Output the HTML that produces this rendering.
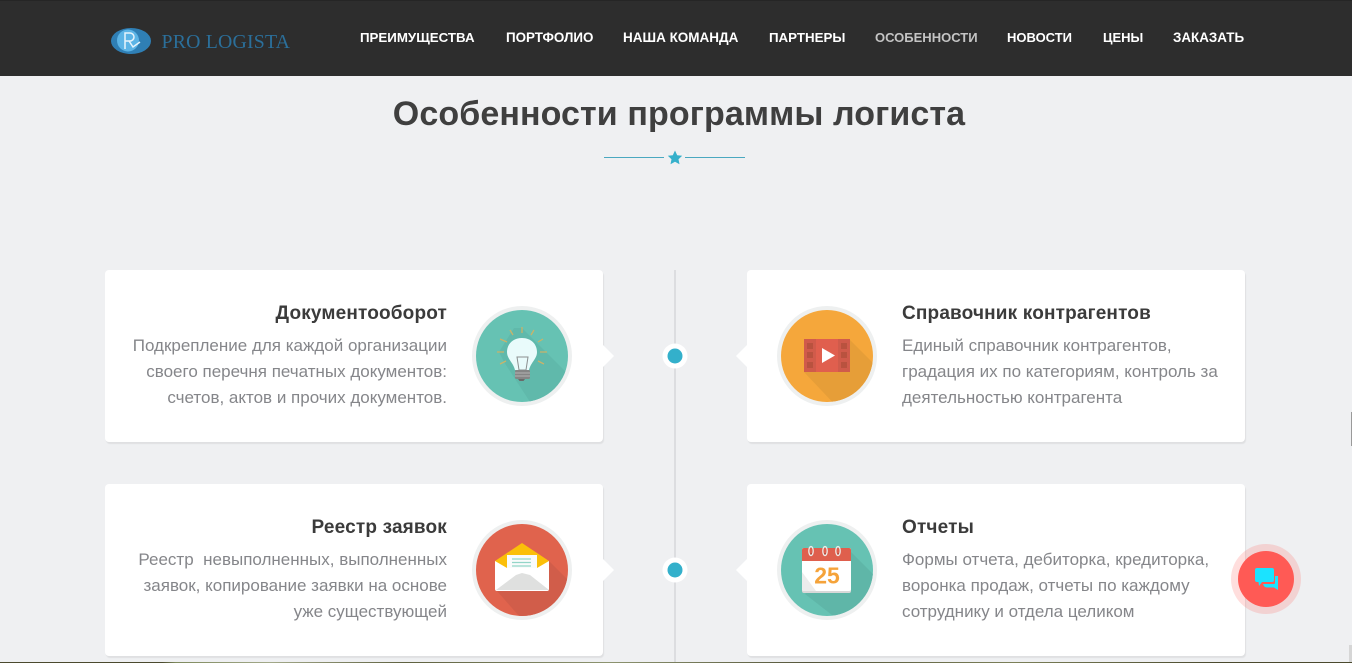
<!DOCTYPE html>
<html lang="ru"><head><meta charset="utf-8"><title>Pro Logista</title>
<style>
html,body{margin:0;padding:0;width:1352px;height:663px;overflow:hidden;background:#eff0f2;font-family:"Liberation Sans",sans-serif}
.a{position:absolute;white-space:nowrap}
#hdr{position:absolute;left:0;top:0;width:1352px;height:76px;background:#2d2d2d;border-top:1px solid #252525;box-sizing:border-box}
.n{position:absolute;top:30px;font-size:13.400px;line-height:16px;font-weight:700;color:#fff;white-space:nowrap}
.card{position:absolute;width:498px;height:172px;background:#fff;border-radius:4px;box-shadow:1px 2px 1px #dfe0e2}
.t{position:absolute;font-size:19px;line-height:24px;font-weight:700;color:#3b3b3b;white-space:nowrap;letter-spacing:.17px}
.p{position:absolute;font-size:17px;line-height:26px;color:#85868a;white-space:nowrap}
.r{text-align:right;right:905px}
.l{left:902px}
</style></head><body>
<div id="hdr"></div>
<svg class="a" style="left:108px;top:24px" width="48" height="34" viewBox="0 0 48 34">
<ellipse cx="23" cy="17" rx="20" ry="13" fill="#2f7fb5"/><circle cx="20" cy="16.500" r="11" fill="#5cb4e6"/>
<path d="M17 25V9h5a4 4 0 0 1 0 8h-5M21 17l4 6 7-5" fill="none" stroke="#e6f3fb" stroke-width="1.500"/></svg>
<div class="a" style="left:161.500px;top:30px;font:19.800px/24px 'Liberation Serif',serif;color:#2b6f9a;letter-spacing:.2px">PRO LOGISTA</div>
<div class="n" style="left:360px;font-size:13.300px">ПРЕИМУЩЕСТВА</div>
<div class="n" style="left:506px">ПОРТФОЛИО</div>
<div class="n" style="left:623px;font-size:13.500px">НАША КОМАНДА</div>
<div class="n" style="left:769px;font-size:13.300px">ПАРТНЕРЫ</div>
<div class="n" style="left:875px;color:#c4c4c4;font-size:13px">ОСОБЕННОСТИ</div>
<div class="n" style="left:1007px;font-size:13px">НОВОСТИ</div>
<div class="n" style="left:1103px;font-size:13px">ЦЕНЫ</div>
<div class="n" style="left:1173px">ЗАКАЗАТЬ</div>

<div class="a" style="left:0;width:1358px;text-align:center;top:93px;font-size:34px;line-height:42px;font-weight:700;color:#3f3f3f;letter-spacing:.1px">Особенности программы логиста</div>
<svg class="a" style="left:600px;top:148px" width="150" height="20" viewBox="0 0 150 20">
<path d="M4 9.500H64M85 9.500H145" stroke="#4aa8c0" stroke-width="1"/>
<path d="M75 2.500l2.200 4.700 5 .6-3.700 3.400 1 5-4.500-2.500-4.500 2.500 1-5-3.700-3.400 5-.6z" fill="#35b0cb"/></svg>

<div class="a" style="left:674px;top:270px;width:2px;height:393px;background:#dcdde0"></div>

<div class="card" style="left:105px;top:270px"></div>
<div class="card" style="left:747px;top:270px"></div>
<div class="card" style="left:105px;top:484px"></div>
<div class="card" style="left:747px;top:484px"></div>

<svg class="a" style="left:0;top:0" width="1352" height="663" viewBox="0 0 1352 663">
<defs><clipPath id="c1"><circle cx="522" cy="356" r="46"/></clipPath><clipPath id="c2"><circle cx="827" cy="356" r="46"/></clipPath><clipPath id="c3"><circle cx="522" cy="570" r="46"/></clipPath><clipPath id="c4"><circle cx="827" cy="570" r="46"/></clipPath></defs>
<path d="M603 345l11 11-11 11z" fill="#fff"/><path d="M747 345l-11 11 11 11z" fill="#fff"/>
<path d="M603 559l11 11-11 11z" fill="#fff"/><path d="M747 559l-11 11 11 11z" fill="#fff"/>
<g fill="#fff"><circle cx="675" cy="356" r="12.500"/><circle cx="675" cy="570" r="12.500"/></g>
<g fill="#33b0cb"><circle cx="675" cy="356" r="7.500"/><circle cx="675" cy="570" r="7.500"/></g>

<circle cx="522" cy="356" r="50" fill="#eef0f0"/><circle cx="522" cy="356" r="46" fill="#66c2b3"/>
<path clip-path="url(#c1)" d="M522 328l50 50-30 30-8 0-30-46-5-10 15-24z" fill="#60b9ab"/>
<path d="M510 330l3 5M522 327v6M534 330l-3 5M500 339l7 3M543 339l-5 3M497 352h7M540 352h7M500 364l6-3M544 364l-6-3" stroke="#c9b36a" stroke-width="1.300" fill="none"/>
<path d="M522 338c-9 0-15 6-15 14 0 7 6 10 8 18h14c2-8 8-11 8-18 0-8-6-14-15-14z" fill="#e9fbfb"/>
<path d="M517 357h11l-2 13h-7z" fill="none" stroke="#8b8f8f" stroke-width="1"/>
<rect x="515" y="370" width="15" height="9" rx="1.500" fill="#858585"/><path d="M515 373h15M515 376h15" stroke="#b4b4b4"/>
<path d="M518 379h7l-1.500 2h-4z" fill="#6a6a6a"/>

<circle cx="827" cy="356" r="50" fill="#eef0f0"/><circle cx="827" cy="356" r="46" fill="#f5a73b"/>
<path clip-path="url(#c2)" d="M850 340l30 30-40 40-36-38z" fill="#e69e38"/>
<rect x="804" y="339" width="46" height="33" rx="1.500" fill="#e05f4e"/>
<path d="M804 339h12v33h-12zM838 339h12v33h-12z" fill="#d05b4b"/>
<g fill="#b9523f"><rect x="807" y="343" width="6" height="6"/><rect x="807" y="352" width="6" height="6"/><rect x="807" y="362" width="6" height="6"/><rect x="841" y="343" width="6" height="6"/><rect x="841" y="352" width="6" height="6"/><rect x="841" y="362" width="6" height="6"/></g>
<path d="M822 348l13 7.500-13 7.500z" fill="#fff"/>

<circle cx="522" cy="570" r="50" fill="#eef0f0"/><circle cx="522" cy="570" r="46" fill="#e0634d"/>
<path clip-path="url(#c3)" d="M497 591h52v-30l25 25-30 30h-25z" fill="#d15d4a"/>
<path d="M495 561l27-18 27 18v7h-54z" fill="#fbbf09"/>
<rect x="507" y="555" width="30" height="26" fill="#f9fbfb"/>
<path d="M512 559h19M512 562.500h19M512 566h19" stroke="#93d5c8" stroke-width="1.200"/>
<path d="M495 561l12 7h30l12-7v28a2 2 0 0 1-2 2h-50a2 2 0 0 1-2-2z" fill="#fff"/>
<path d="M496 590l20-15 6-2 8 2 19 15z" fill="#dfe0df"/>

<circle cx="827" cy="570" r="50" fill="#eef0f0"/><circle cx="827" cy="570" r="46" fill="#66c2b3"/>
<path clip-path="url(#c4)" d="M851 552l30 30-40 40-36-28z" fill="#5fb6a8"/>
<rect x="802" y="548" width="49" height="45" rx="2" fill="#d8d8d8"/>
<rect x="802" y="548" width="49" height="43" rx="2" fill="#fff"/>
<path d="M802 561v-11a2 2 0 0 1 2-2h45a2 2 0 0 1 2 2v11z" fill="#df5f4d"/>
<path d="M802 572l14 19h-12a2 2 0 0 1-2-2z" fill="#ececec"/>
<g fill="#b04a3c"><circle cx="811.500" cy="554.500" r="1.500"/><circle cx="825" cy="554.500" r="1.500"/><circle cx="838.500" cy="554.500" r="1.500"/></g>
<g fill="none" stroke="#eeeae6" stroke-width="1.300"><ellipse cx="811" cy="551" rx="2.200" ry="4.500"/><ellipse cx="825" cy="551" rx="2.200" ry="4.500"/><ellipse cx="838" cy="551" rx="2.200" ry="4.500"/></g>
<text x="827" y="583.500" text-anchor="middle" font-family="Liberation Sans" font-weight="700" font-size="23" fill="#f5a33a">25</text>

<circle cx="1266" cy="579" r="35" fill="#ff5a55" fill-opacity=".2"/><circle cx="1266" cy="579" r="28" fill="#ff5a55"/>
<path d="M1257 568h15a2 2 0 0 1 2 2v10a2 2 0 0 1-2 2h-10l-3 4-.5-4h-1.500a2 2 0 0 1-2-2v-10a2 2 0 0 1 2-2z" fill="#1be3ff"/>
<path d="M1275 576h3v14l-4-2.500h-7c-2 0-3-1-4-3.500h11a1 1 0 0 0 1-1z" fill="#1be3ff"/>
</svg>

<div class="t r" style="top:302px">Документооборот</div>
<div class="p r" style="top:333px">Подкрепление для каждой организации</div>
<div class="p r" style="top:359px">своего перечня печатных документов:</div>
<div class="p r" style="top:385px">счетов, актов и прочих документов.</div>

<div class="t l" style="top:302px">Справочник контрагентов</div>
<div class="p l" style="top:333px">Единый справочник контрагентов,</div>
<div class="p l" style="top:359px">градация их по категориям, контроль за</div>
<div class="p l" style="top:385px">деятельностью контрагента</div>

<div class="t r" style="top:516px">Реестр заявок</div>
<div class="p r" style="top:547px">Реестр&nbsp; невыполненных, выполненных</div>
<div class="p r" style="top:573px">заявок, копирование заявки на основе</div>
<div class="p r" style="top:599px">уже существующей</div>

<div class="t l" style="top:516px">Отчеты</div>
<div class="p l" style="top:547px">Формы отчета, дебиторка, кредиторка,</div>
<div class="p l" style="top:573px">воронка продаж, отчеты по каждому</div>
<div class="p l" style="top:599px">сотруднику и отдела целиком</div>

<div class="a" style="left:0;top:662px;width:1352px;height:1px;background:linear-gradient(90deg,#4b4a2e 0,#4b4a2e 12%,#7f8a5e 13%,#a3a98a 20%,#5f6140 30%,#8d9470 45%,#55553a 60%,#7c8059 75%,#4b4a2e 90%)"></div>
<div class="a" style="left:1351px;top:412px;width:1px;height:34px;background:#9a9a9a"></div>
<div class="a" style="left:1349px;top:645px;width:3px;height:17px;background:#d6d6d6"></div>
</body></html>
